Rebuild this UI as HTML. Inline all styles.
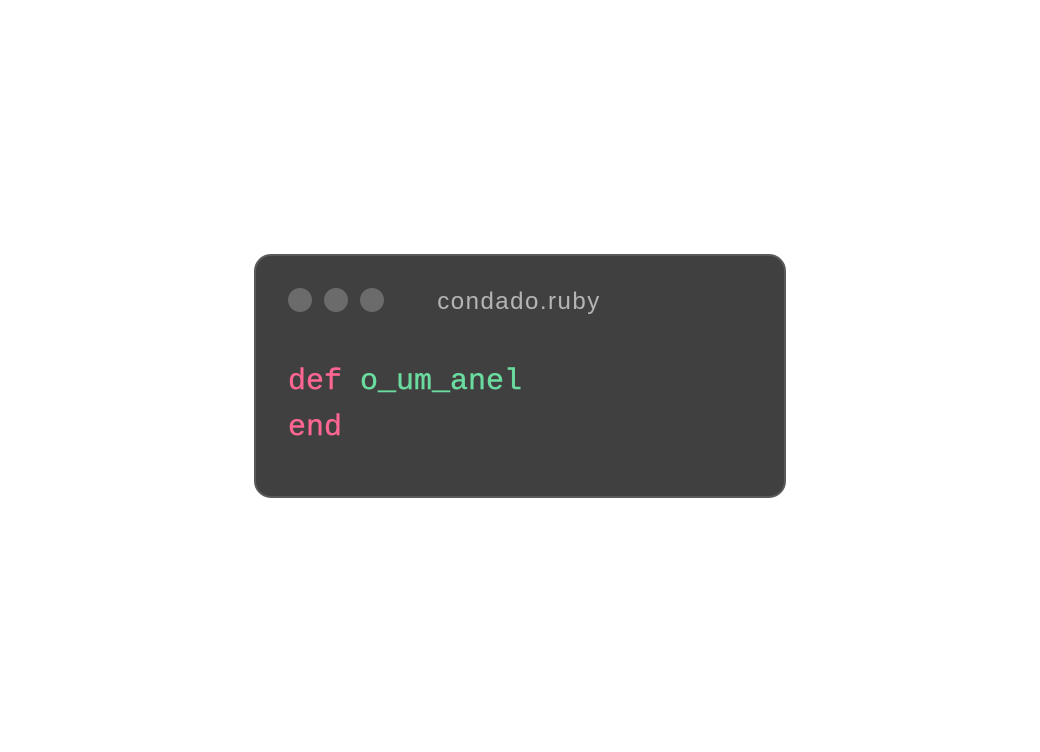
<!DOCTYPE html>
<html><head><style>
body{margin:0;width:1040px;height:752px;background:#fff;position:relative;overflow:hidden}
.win{position:absolute;left:254px;top:254px;width:528px;height:240px;background:#404040;border:2px solid #5a5a5a;border-radius:17px}
.dot{position:absolute;top:32px;width:24px;height:24px;border-radius:50%;background:#6b6b6b}
.title{position:absolute;left:-3px;width:528px;top:32px;text-align:center;font:24px "Liberation Sans",sans-serif;letter-spacing:1.5px;color:#b4b4b4;padding-left:2px}
.code{position:absolute;left:32px;top:103px;font:30px/46px "Liberation Mono",monospace;color:#ff6692;white-space:pre;-webkit-text-stroke:0.4px currentColor}
.g{color:#6bdca0}
</style></head><body>
<div class="win">
<div class="dot" style="left:32px"></div>
<div class="dot" style="left:68px"></div>
<div class="dot" style="left:104px"></div>
<div class="title">condado.ruby</div>
<div class="code">def <span class="g">o_um_anel</span>
end</div>
</div>
</body></html>
